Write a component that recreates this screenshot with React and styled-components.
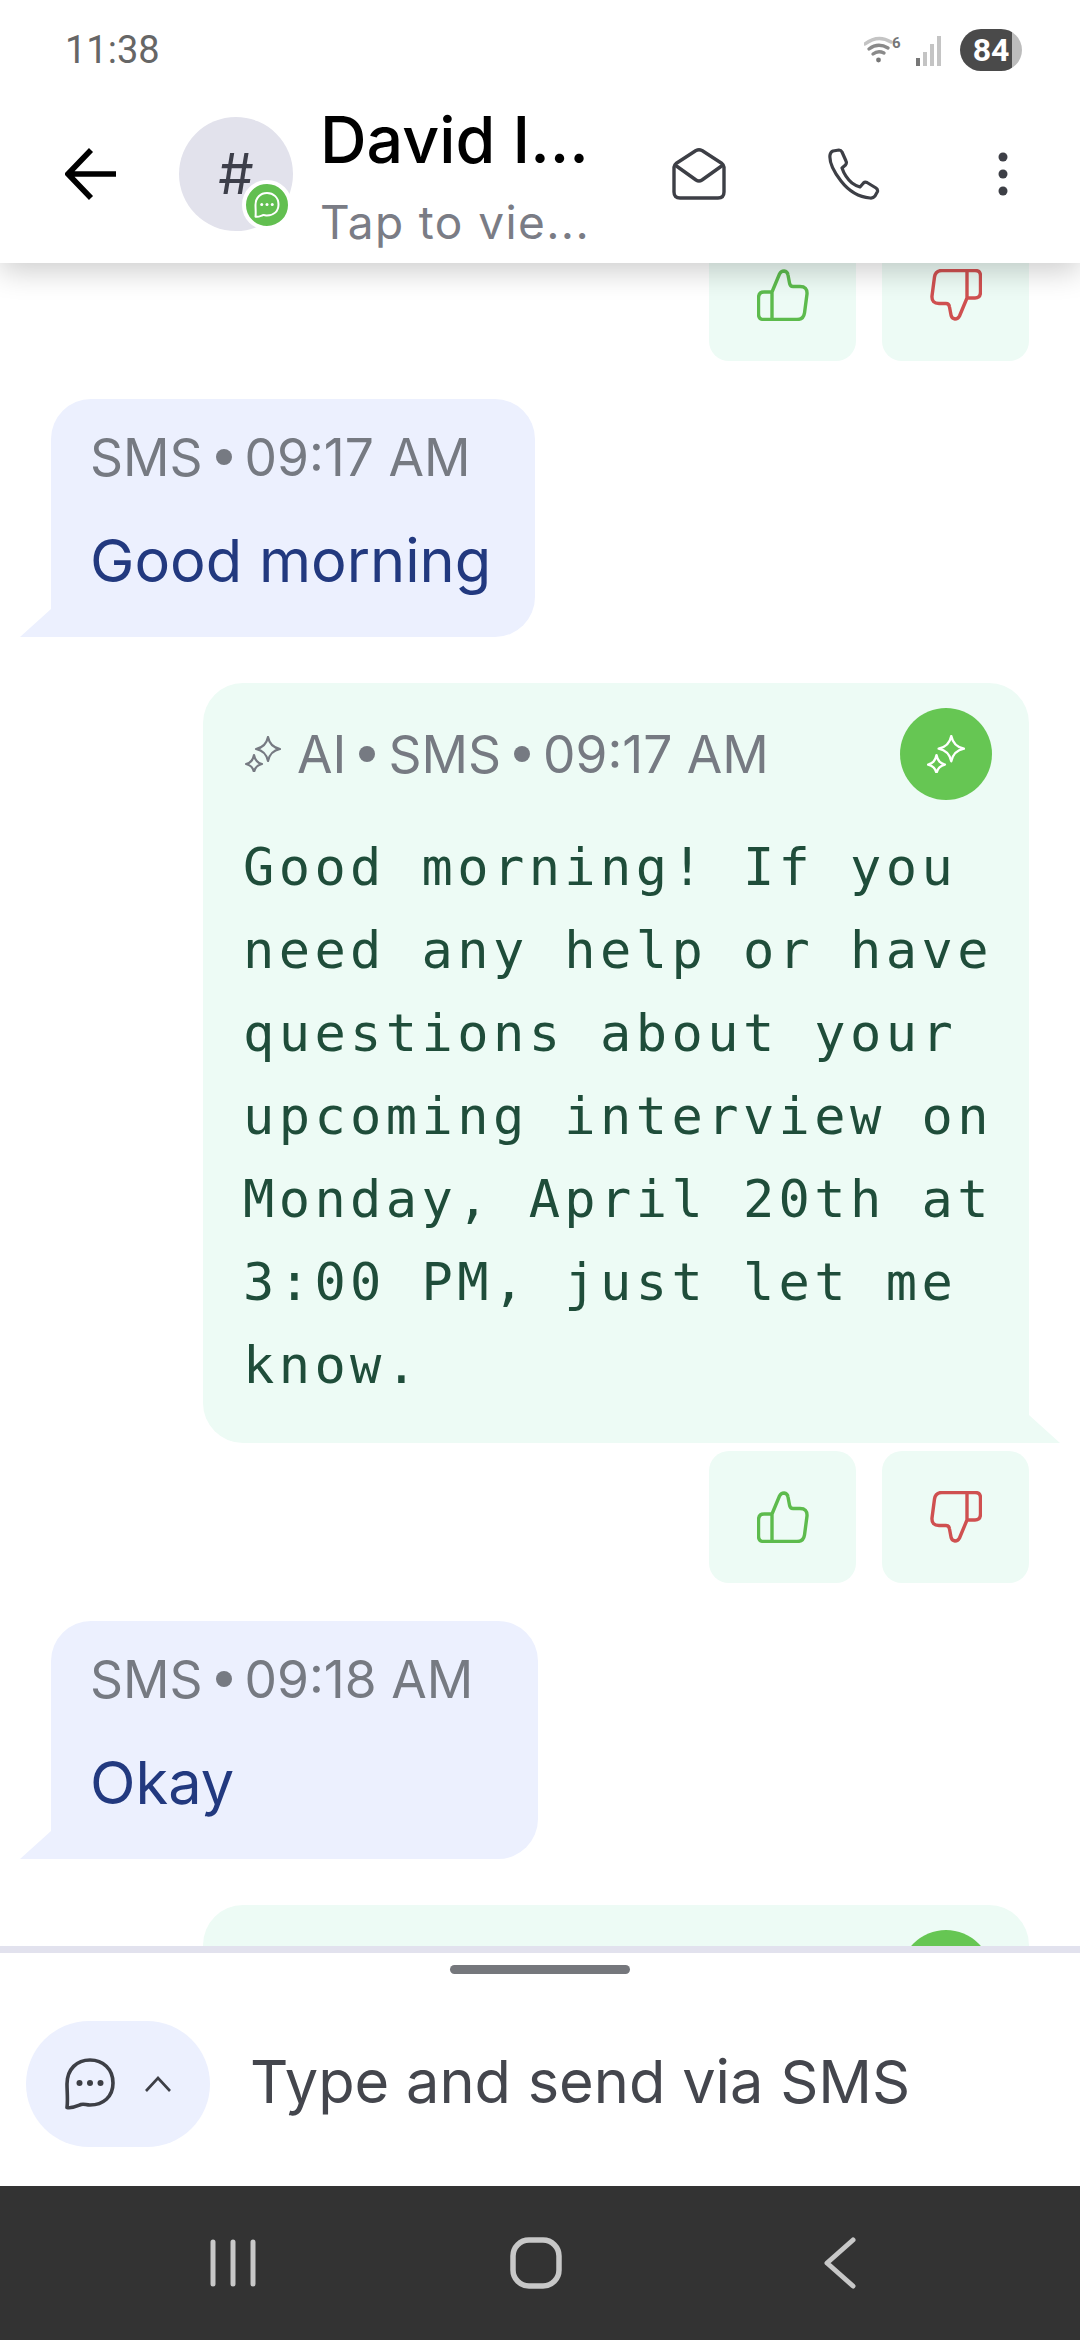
import styled, { createGlobalStyle } from 'styled-components';

const GlobalStyle = createGlobalStyle`
  html, body {
    margin: 0;
    padding: 0;
    background: #fff;
  }
  * {
    box-sizing: border-box;
  }
`;

const Screen = styled.div`
  width: 1080px;
  height: 2340px;
  display: flex;
  flex-direction: column;
  overflow: hidden;
  background: #fff;
  font-family: Inter, "Liberation Sans", sans-serif;
`;

const Top = styled.header`
  position: relative;
  z-index: 2;
  height: 263px;
  flex: none;
  background: #fff;
  box-shadow: 0 8px 28px rgba(0, 0, 0, 0.2);
`;

const StatusBar = styled.div`
  height: 100px;
  display: flex;
  align-items: center;
  padding: 0 58px 0 65px;
  color: #666;
`;

const Clock = styled.span`
  font-family: Roboto, sans-serif;
  font-size: 38px;
  flex: 1;
`;

const StatusIcons = styled.div`
  display: flex;
  align-items: center;
  gap: 14px;
`;

const Battery = styled.div`
  width: 62px;
  height: 42px;
  border-radius: 21px;
  background: linear-gradient(90deg, #4a4a4a 84%, #bcbcbc 84%);
  color: #fff;
  font: 700 32px Roboto, sans-serif;
  display: flex;
  align-items: center;
  justify-content: center;
`;

const TitleBar = styled.div`
  height: 163px;
  display: flex;
  align-items: center;
  padding: 0 0 16px 65px;
`;

const IconSlot = styled.div`
  display: flex;
  align-items: center;
  justify-content: center;
  flex: none;
  width: ${({ $w }) => $w}px;
  margin-left: ${({ $ml }) => $ml || 0}px;
`;

const Avatar = styled.div`
  position: relative;
  flex: none;
  width: 114px;
  height: 114px;
  margin-left: 62px;
  border-radius: 50%;
  background: #e2e2ec;
  color: #3d3f4a;
  font-size: 56px;
  display: flex;
  align-items: center;
  justify-content: center;
`;

const AvatarBadge = styled.div`
  position: absolute;
  right: 1px;
  bottom: 1px;
  width: 50px;
  height: 50px;
  border-radius: 50%;
  background: #62bf50;
  border: 4px solid #fff;
  display: flex;
  align-items: center;
  justify-content: center;
`;

const Names = styled.div`
  width: 266px;
  margin-left: 27px;
  padding-top: 3px;
  flex: none;
`;

const Name = styled.div`
  font-size: 64.5px;
  font-weight: 500;
  line-height: 76px;
  color: #000;
  white-space: nowrap;
`;

const Sub = styled.div`
  margin-top: 17px;
  font-size: 46px;
  line-height: 54px;
  color: #7a7c85;
  letter-spacing: 1.4px;
  white-space: nowrap;
`;

const Messages = styled.main`
  flex: 1;
  min-height: 0;
  overflow: hidden;
  display: flex;
  flex-direction: column;
`;

const Incoming = styled.div`
  position: relative;
  flex: none;
  align-self: flex-start;
  width: ${({ $w }) => $w}px;
  height: 238px;
  margin: 38px 0 0 51px;
  padding: 33px 0 0 39px;
  background: #ecf0fe;
  border-radius: 40px 40px 40px 0;

  &::before {
    content: '';
    position: absolute;
    left: -31px;
    bottom: 0;
    width: 31px;
    height: 28px;
    background: #ecf0fe;
    clip-path: polygon(100% 0, 100% 100%, 0 100%);
  }
`;

const Outgoing = styled.div`
  position: relative;
  flex: none;
  align-self: flex-end;
  width: 826px;
  margin: 46px 51px 0 0;
  padding: 25px 37px 36px 40px;
  background: #edfbf5;
  border-radius: 40px 40px 0 40px;

  &::after {
    content: '';
    position: absolute;
    right: -31px;
    bottom: 0;
    width: 31px;
    height: 28px;
    background: #edfbf5;
    clip-path: polygon(0 0, 100% 100%, 0 100%);
  }
`;

const Meta = styled.div`
  display: flex;
  align-items: center;
  gap: 13px;
  height: 50px;
  font-size: 51.5px;
  color: #767a82;
  white-space: nowrap;
`;

const Dot = styled.span`
  width: 16px;
  height: 16px;
  border-radius: 50%;
  background: #767a82;
`;

const Body = styled.div`
  margin-top: 45px;
  font-size: 59.5px;
  line-height: 66px;
  color: #22397f;
  white-space: nowrap;
`;

const BubbleHead = styled.div`
  display: flex;
  align-items: center;
  justify-content: space-between;
`;

const MetaIcon = styled.span`
  display: flex;
  margin: 0 3px 0 2px;
`;

const AiBadge = styled.div`
  width: 92px;
  height: 92px;
  border-radius: 50%;
  background: #66c653;
  display: flex;
  align-items: center;
  justify-content: center;
`;

const AiText = styled.div`
  margin-top: 26px;
  font-family: "DejaVu Sans Mono", "Liberation Mono", monospace;
  font-size: 52px;
  line-height: 83px;
  letter-spacing: 4.4px;
  color: #1f4d3a;
  white-space: pre;
`;

const Actions = styled.div`
  flex: none;
  align-self: flex-end;
  display: flex;
  gap: 26px;
  margin: ${({ $first }) => ($first ? '-34px' : '8px')} 51px 0 0;
`;

const Vote = styled.button`
  width: 147px;
  height: 132px;
  padding: 0;
  border: none;
  border-radius: 20px;
  background: #edfbf5;
  display: flex;
  align-items: center;
  justify-content: center;
`;

const Divider = styled.div`
  flex: none;
  height: 7px;
  background: #e2e2ee;
`;

const Composer = styled.footer`
  flex: none;
  height: 233px;
  background: #fff;
  display: flex;
  flex-direction: column;
`;

const Handle = styled.div`
  width: 180px;
  height: 9px;
  margin: 12px auto 0;
  border-radius: 5px;
  background: #75777c;
`;

const InputRow = styled.div`
  display: flex;
  align-items: center;
  gap: 40px;
  margin-top: 47px;
  padding-left: 26px;
`;

const ChannelPill = styled.div`
  width: 184px;
  height: 126px;
  border-radius: 63px;
  background: #ecf0fe;
  display: flex;
  align-items: center;
  gap: 28px;
  padding-left: 38px;
`;

const Placeholder = styled.div`
  margin-bottom: 6px;
  font-size: 59.5px;
  color: #44464d;
  white-space: nowrap;
`;

const NavBar = styled.nav`
  flex: none;
  height: 154px;
  background: #333;
  display: flex;
  align-items: center;
  padding-left: 210px;
`;

const Sparkle = ({ color, size }) => (
  <svg width={size} height={size} viewBox="0 0 36 36" fill="none" stroke={color} strokeWidth="2.2" strokeLinejoin="round">
    <path d="M23 1 Q25 11 35 13 Q25 15 23 25 Q21 15 11 13 Q21 11 23 1Z" />
    <path d="M9 19 Q10.4 26.6 17 28 Q10.4 29.4 9 36 Q7.6 29.4 1 28 Q7.6 26.6 9 19Z" />
  </svg>
);

const ThumbUp = ({ flip }) => (
  <svg
    width="52"
    height="52"
    viewBox="0 0 52 52"
    fill="none"
    stroke={flip ? '#cf5050' : '#5dbb4d'}
    strokeWidth="3.4"
    strokeLinejoin="round"
    strokeLinecap="round"
    transform={flip ? 'rotate(180)' : undefined}
  >
    <path d="M15 23 L22.5 5 Q24 2 27 2 Q30.5 2.5 31 6 L32.5 14 Q33 17.5 36 17.5 H43 Q50.5 17.5 50 25 L47.5 44 Q46.5 50.5 40 50.5 H7 Q1.5 50.5 1.5 45 V29 Q1.5 23 7 23 H15 V50.5" />
  </svg>
);

const SMALL_THUMBS = [false, true];

const Votes = ({ first }) => (
  <Actions $first={first}>
    {SMALL_THUMBS.map((flip) => (
      <Vote key={String(flip)}>
        <ThumbUp flip={flip} />
      </Vote>
    ))}
  </Actions>
);

const ChatBubble = ({ size, color, strokeWidth }) => (
  <svg width={size} height={size} viewBox="0 0 52 52" fill="none" stroke={color} strokeWidth={strokeWidth} strokeLinejoin="round">
    <path d="M3 26 C3 11 13 2 26 2 C39 2 49 11 49 25 C49 39 39 47 26 47 C22 47 20 45.5 17 46.5 C12 48.5 8 50.5 3 49.5 C4 43 3 33 3 26Z" />
    <circle cx="15.5" cy="25" r="3" fill={color} stroke="none" />
    <circle cx="26" cy="25" r="3" fill={color} stroke="none" />
    <circle cx="36.5" cy="25" r="3" fill={color} stroke="none" />
  </svg>
);

export default function App() {
  return (
    <Screen>
      <GlobalStyle />
      <Top>
        <StatusBar>
          <Clock>11:38</Clock>
          <StatusIcons>
            <svg width="38" height="30" viewBox="0 0 38 30" fill="none" stroke="#8a8a8a" strokeWidth="3.4" strokeLinecap="round">
              <path d="M1 9 Q14 -1 27 7" stroke="#c4c4c4" />
              <path d="M5 14 Q14 7 24 13" />
              <path d="M9 19 Q14 15 20 18" />
              <circle cx="14.5" cy="25" r="2.4" fill="#777" stroke="none" />
              <text x="28" y="13" fontSize="15" fontWeight="700" fill="#777" stroke="none" fontFamily="Roboto, sans-serif">6</text>
            </svg>
            <svg width="30" height="32" viewBox="0 0 30 32" fill="#c4c4c4">
              <rect x="0" y="24" width="4" height="8" fill="#777" />
              <rect x="7" y="18" width="4" height="14" />
              <rect x="14" y="10" width="4" height="22" />
              <rect x="21" y="2" width="4" height="30" />
            </svg>
            <Battery>84</Battery>
          </StatusIcons>
        </StatusBar>
        <TitleBar>
          <svg width="52" height="52" viewBox="0 0 52 52" fill="none" stroke="#000" strokeWidth="5.6">
            <path d="M51 26 H5 M26 2 L3 26 L26 50" />
          </svg>
          <Avatar>
            #
            <AvatarBadge>
              <ChatBubble size={26} color="#fff" strokeWidth={4} />
            </AvatarBadge>
          </Avatar>
          <Names>
            <Name>David I...</Name>
            <Sub>Tap to vie...</Sub>
          </Names>
          <IconSlot $w={54} $ml={86}>
            <svg width="54" height="52" viewBox="0 0 54 52" fill="none" stroke="#3d3f46" strokeWidth="3.4" strokeLinejoin="round">
              <path d="M2 19 Q2 17 4 15.5 L24 2.5 Q27 1 30 2.5 L50 15.5 Q52 17 52 19 V44 Q52 50 46 50 H8 Q2 50 2 44Z" />
              <path d="M3 17 L24 32 Q27 34 30 32 L51 17" />
            </svg>
          </IconSlot>
          <IconSlot $w={52} $ml={102}>
            <svg width="52" height="52" viewBox="0 0 52 52" fill="none" stroke="#3d3f46" strokeWidth="3.2" strokeLinejoin="round">
              <path d="M5 3 L11 2 Q13 2 14 4 L18 13 Q19 15 17.5 17 L14 20 Q17 29 24 35 Q28 38 32 39 L35.5 35 Q37 33.5 39 34.5 L48 40 Q50 41.5 49.5 43.5 L47 48 Q45 50.5 42 50 C30 49 20 42 13 33 C6 24 1 15 2 7 Q2.5 4 5 3Z" />
            </svg>
          </IconSlot>
          <IconSlot $w={12} $ml={117}>
            <svg width="12" height="46" viewBox="0 0 12 46" fill="#3d3f46">
              <circle cx="6" cy="6" r="4.5" />
              <circle cx="6" cy="23" r="4.5" />
              <circle cx="6" cy="40" r="4.5" />
            </svg>
          </IconSlot>
        </TitleBar>
      </Top>

      <Messages>
        <Votes first />
        <Incoming $w={484}>
          <Meta>
            <span>SMS</span>
            <Dot />
            <span>09:17 AM</span>
          </Meta>
          <Body>Good morning</Body>
        </Incoming>
        <Outgoing>
          <BubbleHead>
            <Meta>
              <MetaIcon>
                <Sparkle color="#767a82" size={36} />
              </MetaIcon>
              <span>AI</span>
              <Dot />
              <span>SMS</span>
              <Dot />
              <span>09:17 AM</span>
            </Meta>
            <AiBadge>
              <Sparkle color="#fff" size={38} />
            </AiBadge>
          </BubbleHead>
          <AiText>{`Good morning! If you
need any help or have
questions about your
upcoming interview on
Monday, April 20th at
3:00 PM, just let me
know.`}</AiText>
        </Outgoing>
        <Votes />
        <Incoming $w={487}>
          <Meta>
            <span>SMS</span>
            <Dot />
            <span>09:18 AM</span>
          </Meta>
          <Body>Okay</Body>
        </Incoming>
        <Outgoing>
          <BubbleHead>
            <span />
            <AiBadge>
              <Sparkle color="#fff" size={38} />
            </AiBadge>
          </BubbleHead>
        </Outgoing>
      </Messages>

      <Divider />
      <Composer>
        <Handle />
        <InputRow>
          <ChannelPill>
            <ChatBubble size={52} color="#3d3f46" strokeWidth={3.6} />
            <svg width="28" height="18" viewBox="0 0 28 18" fill="none" stroke="#3d3f46" strokeWidth="2.6">
              <path d="M2 16 L14 3 L26 16" />
            </svg>
          </ChannelPill>
          <Placeholder>Type and send via SMS</Placeholder>
        </InputRow>
      </Composer>

      <NavBar>
        <svg width="46" height="48" viewBox="0 0 46 48" stroke="#c8c8c8" strokeWidth="5" strokeLinecap="round">
          <path d="M3 3 V45 M23 3 V45 M43 3 V45" />
        </svg>
        <IconSlot $w={52} $ml={254}>
          <svg width="52" height="52" viewBox="0 0 52 52" fill="none" stroke="#c8c8c8" strokeWidth="5.5">
            <rect x="3" y="3" width="46" height="46" rx="16" />
          </svg>
        </IconSlot>
        <IconSlot $w={32} $ml={262}>
          <svg width="32" height="52" viewBox="0 0 32 52" fill="none" stroke="#c8c8c8" strokeWidth="5" strokeLinecap="round" strokeLinejoin="round">
            <path d="M29 3 L3 26 L29 49" />
          </svg>
        </IconSlot>
      </NavBar>
    </Screen>
  );
}
